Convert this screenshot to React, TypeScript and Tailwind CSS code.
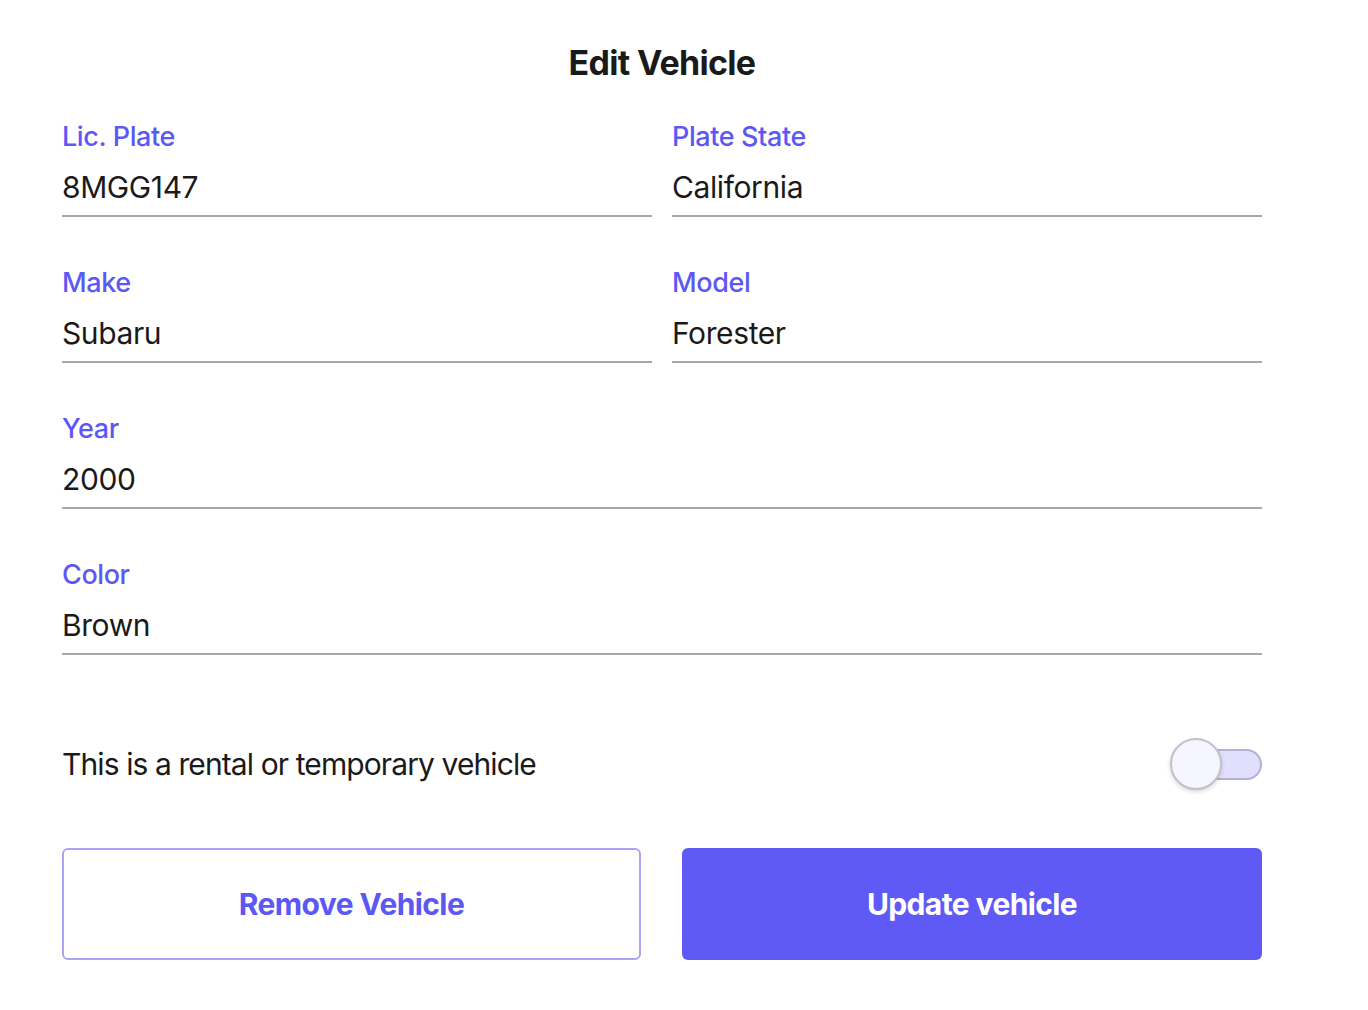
import { useState } from 'react';

const font = { fontFamily: 'Inter, "Liberation Sans", sans-serif' };

function Field({ label, value }: { label: string; value: string }) {
  return (
    <div className="flex flex-col">
      <label className="text-[27px] leading-[32px] font-medium text-[#5c58f4] tracking-[-0.4px]">{label}</label>
      <div className="mt-4 pb-[10px] border-b-2 border-[#a7a6ad] text-[30px] leading-[36px] text-[#1a1a1a] tracking-[-0.4px]">
        {value}
      </div>
    </div>
  );
}

export default function App() {
  const [rental, setRental] = useState(false);

  return (
    <div className="min-h-screen bg-white" style={font}>
      <div className="w-[1200px] ml-[62px] pt-[43px]">
        <h1 className="text-center text-[34px] leading-[40px] font-bold text-[#1a1a1a] tracking-[-0.7px]">Edit Vehicle</h1>

        <div className="mt-[38px] grid grid-cols-2 gap-x-5 gap-y-[50px]">
          <Field label="Lic. Plate" value="8MGG147" />
          <Field label="Plate State" value="California" />
          <Field label="Make" value="Subaru" />
          <Field label="Model" value="Forester" />
          <div className="col-span-2">
            <Field label="Year" value="2000" />
          </div>
          <div className="col-span-2">
            <Field label="Color" value="Brown" />
          </div>
        </div>

        <div className="mt-[83px] flex items-center justify-between">
          <span className="text-[30px] leading-[36px] text-[#1a1a1a] tracking-[-0.9px]">This is a rental or temporary vehicle</span>
          <button
            onClick={() => setRental(!rental)}
            className="relative w-[92px] h-[52px] flex items-center"
            aria-label="Rental toggle"
          >
            <span className="absolute right-0 w-[74px] h-[31px] rounded-full bg-[#e1dffc] border-2 border-[#b3b1d6]" />
            <span
              className={`absolute w-[52px] h-[52px] rounded-full bg-[#f5f5ff] border-2 border-[#c2c2c6] shadow-[0_2px_4px_rgba(0,0,0,0.15)] ${
                rental ? 'right-0' : 'left-0'
              }`}
            />
          </button>
        </div>

        <div className="mt-[58px] grid grid-cols-[579px_580px] gap-[41px]">
          <button className="h-[112px] rounded-md border-2 border-[#a8a5f8] bg-white text-[30px] font-bold text-[#5c58f4] tracking-[-0.6px]">
            Remove Vehicle
          </button>
          <button className="h-[112px] rounded-md bg-[#5f59f6] text-[30px] font-bold text-white tracking-[-0.6px]">
            Update vehicle
          </button>
        </div>
      </div>
    </div>
  );
}
